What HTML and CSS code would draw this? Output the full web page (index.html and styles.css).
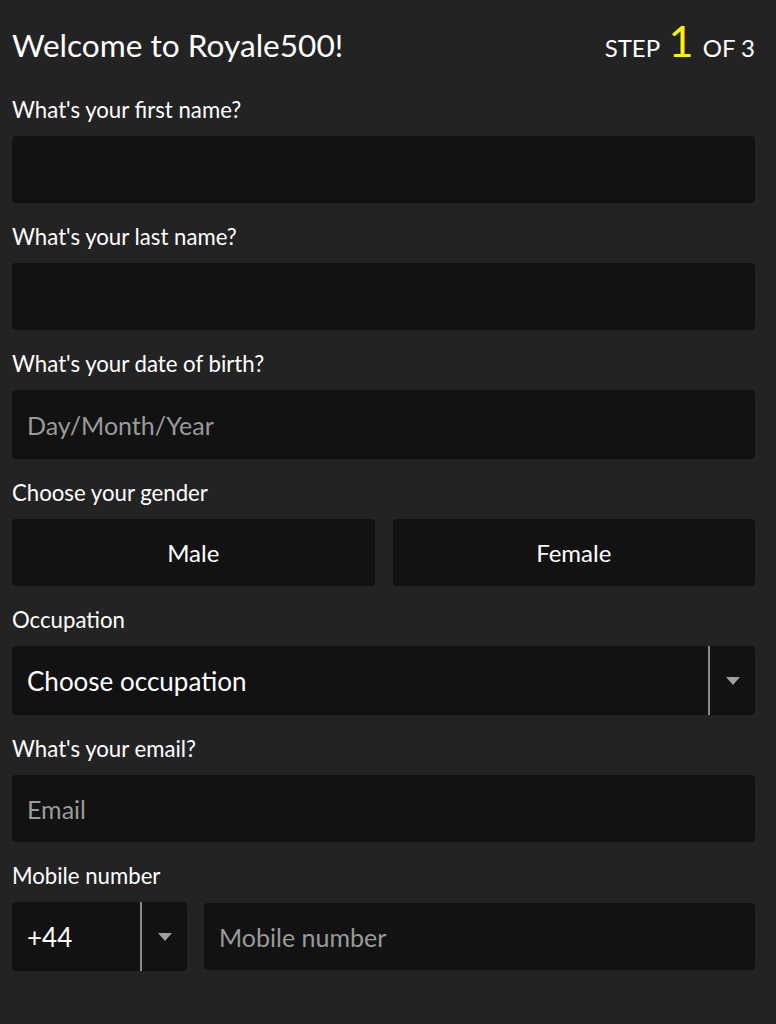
FILE: index.html
```html
<!DOCTYPE html>
<html lang="en">
<head>
<meta charset="utf-8">
<title>Welcome to Royale500!</title>
<link rel="stylesheet" href="styles.css">
</head>
<body>
<main class="page">
  <header class="header">
    <h1 class="title">Welcome to Royale500!</h1>
    <div class="step">STEP <span class="step-num">1</span> OF 3</div>
  </header>

  <div class="field">
    <label class="label">What's your first name?</label>
    <div class="input"></div>
  </div>

  <div class="field">
    <label class="label">What's your last name?</label>
    <div class="input"></div>
  </div>

  <div class="field">
    <label class="label">What's your date of birth?</label>
    <div class="input tall"><span class="placeholder">Day/Month/Year</span></div>
  </div>

  <div class="field">
    <label class="label">Choose your gender</label>
    <div class="gender">
      <div class="input choice">Male</div>
      <div class="input choice">Female</div>
    </div>
  </div>

  <div class="field">
    <label class="label">Occupation</label>
    <div class="input select tall">
      <span class="select-value">Choose occupation</span>
      <span class="select-arrow"><span class="tri"></span></span>
    </div>
  </div>

  <div class="field">
    <label class="label">What's your email?</label>
    <div class="input"><span class="placeholder">Email</span></div>
  </div>

  <div class="field">
    <label class="label">Mobile number</label>
    <div class="phone">
      <div class="input select code tall">
        <span class="select-value">+44</span>
        <span class="select-arrow"><span class="tri"></span></span>
      </div>
      <div class="input mobile"><span class="placeholder">Mobile number</span></div>
    </div>
  </div>
</main>
</body>
</html>
```

FILE: styles.css
```css
html, body {
  margin: 0;
  padding: 0;
  background: #232323;
  color: #ffffff;
  font-family: Lato, "Open Sans", sans-serif;
}

.page {
  padding: 26px 21px 40px 12px;
}

.header {
  display: flex;
  justify-content: space-between;
  align-items: baseline;
  height: 71px;
}

.title {
  margin: 0;
  font-size: 31.6px;
  line-height: 38px;
  font-weight: 400;
}

.step {
  font-size: 24px;
  line-height: 38px;
  font-weight: 400;
}

.step-num {
  color: #fff200;
  font-size: 43px;
  line-height: 0;
  margin: 0 3px;
}

.field {
  display: flex;
  flex-direction: column;
  margin-bottom: 21px;
}

.label {
  font-size: 22.2px;
  line-height: 26px;
  margin-bottom: 13px;
}

.input {
  background: #121212;
  border-radius: 4px;
  height: 67px;
  display: flex;
  align-items: center;
  box-sizing: border-box;
  padding: 0 15px;
  font-size: 25px;
}

.input.tall {
  height: 69px;
}

.placeholder {
  color: #9a9a9a;
}

.gender {
  display: grid;
  grid-template-columns: 1fr 1fr;
  gap: 18px;
}

.choice {
  justify-content: center;
  font-size: 24px;
}

.select {
  padding-right: 0;
}

.select-value {
  flex: 1;
  font-size: 26px;
}

.select-arrow {
  width: 45px;
  height: 100%;
  border-left: 2px solid #8a8a8a;
  display: flex;
  align-items: center;
  justify-content: center;
}

.tri {
  width: 0;
  height: 0;
  border-left: 7.5px solid transparent;
  border-right: 7.5px solid transparent;
  border-top: 8px solid #a0a0a0;
}

.phone {
  display: flex;
  gap: 17px;
  align-items: center;
}

.code {
  width: 175px;
}

.mobile {
  flex: 1;
  height: 67px;
}
```
